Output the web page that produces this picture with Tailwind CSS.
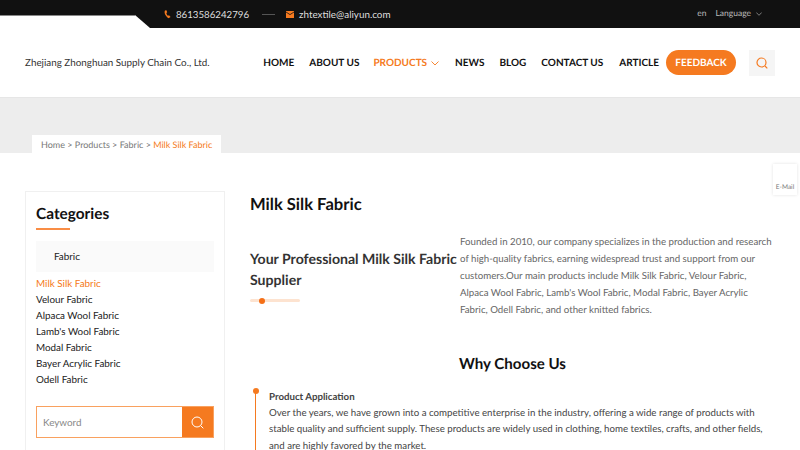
<html lang="en">
<head>
  <meta charset="UTF-8">
  <title>Milk Silk Fabric</title>
  <script src="https://cdn.jsdelivr.net/npm/@tailwindcss/browser@4"></script>
</head>
<body class="bg-white font-['Lato',sans-serif] [text-rendering:geometricPrecision] h-[450px] overflow-hidden relative">
  <!-- top bar -->
  <div class="relative h-[28px] bg-[#111111] flex text-[#dddddd]">
    <div class="absolute left-0 top-[15px] w-[150px] h-[13px] bg-white border-t border-[#888888] [clip-path:polygon(0_0,135px_0,150px_13px,0_13px)]"></div>
    <div class="ml-[164px] flex items-center h-[28px] text-[9.85px]">
      <svg class="w-[7px] h-[9px] mt-[1px]" viewBox="0 0 7 9"><path d="M1 .5 C0 2 .8 5.5 4.5 8.3 L6.6 7 5 5.2 4 5.8 C3 5 2.5 4 2.4 3 L3.2 2.3 2.4 .2 Z" fill="#f57a20"/></svg>
      <span class="ml-[5px] pt-[2px] text-[9.7px]">8613586242796</span>
      <span class="ml-[13px] w-[13px] h-px bg-[#555555]"></span>
      <svg class="ml-[11px] w-[8px] h-[7px] mt-[1px]" viewBox="0 0 8 7"><rect width="8" height="7" fill="#f57a20"/><path d="M0 1 L4 3.6 8 1" stroke="#111111" stroke-width=".8" fill="none"/></svg>
      <span class="ml-[5px] pt-[2px]">zhtextile@aliyun.com</span>
    </div>
    <div class="ml-auto mr-[38px] flex items-center h-[27px] text-[8.5px] text-[#bbbbbb]">
      <span>en</span>
      <span class="ml-[9px]">Language</span>
      <svg class="ml-[5px] w-[6px] h-[4px]" viewBox="0 0 6 4"><path d="M.3 .5 3 3.3 5.7 .5" stroke="#aaaaaa" stroke-width=".7" fill="none"/></svg>
    </div>
  </div>

  <!-- header -->
  <header class="h-[69px] flex items-center pl-[25px] pr-[25px]">
    <div class="text-[9.85px] text-[#333333] w-[240px] pt-[2px]">Zhejiang Zhonghuan Supply Chain Co., Ltd.</div>
    <nav class="flex items-center text-[10px] font-bold text-[#111111] whitespace-nowrap">
      <a class="pt-[2px]">HOME</a>
      <a class="ml-[15px] pt-[2px]">ABOUT US</a>
      <a class="ml-[14px] pt-[2px] text-[#f57a20] flex items-center">PRODUCTS
        <svg class="ml-[4px] w-[8px] h-[5px]" viewBox="0 0 8 5"><path d="M.5 .5 4 4 7.5 .5" stroke="#f57a20" stroke-width=".9" fill="none"/></svg>
      </a>
      <a class="ml-[16px] pt-[2px]">NEWS</a>
      <a class="ml-[15px] pt-[2px]">BLOG</a>
      <a class="ml-[15px] pt-[2px]">CONTACT US</a>
      <a class="ml-[16px] pt-[2px]">ARTICLE</a>
      <a class="ml-[7px] pt-[2px] w-[70px] h-[25px] rounded-full bg-[#f57a20] text-white flex items-center justify-center">FEEDBACK</a>
      <span class="ml-[13px] w-[26px] h-[26px] bg-[#f5f5f5] flex items-center justify-center">
        <svg class="w-[12px] h-[12px]" viewBox="0 0 12 12"><circle cx="5.5" cy="5.5" r="4.5" stroke="#f57a20" stroke-width="1.2" fill="none"/><path d="M9 9 11.3 11.3" stroke="#f57a20" stroke-width="1.2"/></svg>
      </span>
    </nav>
  </header>

  <!-- breadcrumb band -->
  <div class="h-[56px] bg-[#ededed] border-t border-[#e6e6e6] flex items-end pl-[32px]">
    <div class="h-[18px] bg-white px-[9px] pt-[2px] flex items-center text-[9px] text-[#777777] whitespace-pre">Home &gt; Products &gt; Fabric &gt; <span class="text-[#f57a20]">Milk Silk Fabric</span></div>
  </div>

  <!-- main -->
  <main class="flex pl-[25px] pt-[38px]">
    <aside class="w-[200px] h-[300px] shrink-0 border border-[#f0f0f0] px-[10px] pt-[12px]">
      <h3 class="text-[15.4px] leading-[20px] font-bold text-[#111111]">Categories</h3>
      <div class="mt-[4px] w-[34px] h-[2px] bg-[#f98d45]"></div>
      <div class="mt-[11px] h-[31px] bg-[#fafafa] pl-[18px] pt-[2px] flex items-center text-[9.85px] text-[#222222]">Fabric</div>
      <ul class="mt-[4px] text-[9.85px] leading-[16px] text-[#222222]">
        <li class="text-[#f57a20]">Milk Silk Fabric</li>
        <li>Velour Fabric</li>
        <li>Alpaca Wool Fabric</li>
        <li>Lamb's Wool Fabric</li>
        <li>Modal Fabric</li>
        <li>Bayer Acrylic Fabric</li>
        <li>Odell Fabric</li>
      </ul>
      <div class="mt-[18px] h-[32px] flex border border-[#f9a15f]">
        <div class="flex-1 pl-[6px] pt-[2px] flex items-center text-[9.85px] text-[#888888]">Keyword</div>
        <div class="w-[31px] bg-[#f57a20] flex items-center justify-center">
          <svg class="w-[13px] h-[13px]" viewBox="0 0 13 13"><circle cx="6" cy="6" r="5" stroke="#ffffff" stroke-width="1" fill="none"/><path d="M9.7 9.7 12.3 12.3" stroke="#ffffff" stroke-width="1"/></svg>
        </div>
      </div>
    </aside>

    <section class="ml-[25px] w-[525px]">
      <h1 class="text-[16.6px] leading-[26px] font-bold text-[#111111]">Milk Silk Fabric</h1>
      <div class="mt-[15px] flex">
        <div class="w-[210px] shrink-0 pt-[17px]">
          <h2 class="text-[14.1px] leading-[21px] font-bold text-[#333333] whitespace-nowrap">Your Professional Milk Silk Fabric</h2>
          <h2 class="text-[14.1px] leading-[21px] font-bold text-[#333333]">Supplier</h2>
          <div class="relative mt-[8px] w-[50px] h-[3px] rounded-full bg-[#fde3d0]">
            <span class="absolute left-[9px] top-[-1.5px] w-[6px] h-[6px] rounded-full bg-[#f56f16]"></span>
          </div>
        </div>
        <p class="text-[9.7px] leading-[17px] pt-[2px] text-[#666666] w-[315px]">Founded in 2010, our company specializes in the production and research of high-quality fabrics, earning widespread trust and support from our customers.Our main products include Milk Silk Fabric, Velour Fabric, Alpaca Wool Fabric, Lamb's Wool Fabric, Modal Fabric, Bayer Acrylic Fabric, Odell Fabric, and other knitted fabrics.</p>
      </div>
      <h2 class="mt-[33px] text-center text-[15.1px] leading-[24px] font-bold text-[#111111]">Why Choose Us</h2>
      <div class="relative mt-[13px] pl-[19px] text-[9.7px] leading-[16.5px] text-[#444444]">
        <span class="absolute left-[2.5px] top-[-1px] w-[6px] h-[6px] rounded-full bg-[#f57a20]"></span>
        <span class="absolute left-[5px] top-[3px] w-px h-[70px] bg-[#f57a20]"></span>
        <div class="font-bold -mb-[1px]">Product Application</div>
        <p>Over the years, we have grown into a competitive enterprise in the industry, offering a wide range of products with stable quality and sufficient supply. These products are widely used in clothing, home textiles, crafts, and other fields, and are highly favored by the market.</p>
      </div>
    </section>
  </main>

  <!-- floating email -->
  <div class="absolute left-[773px] top-[164px] w-[24px] h-[31px] bg-white shadow-[0_0_3px_rgba(0,0,0,0.12)] flex items-end justify-center pb-[2px] text-[6.5px] text-[#777777]">E-Mail</div>
</body>
</html>
